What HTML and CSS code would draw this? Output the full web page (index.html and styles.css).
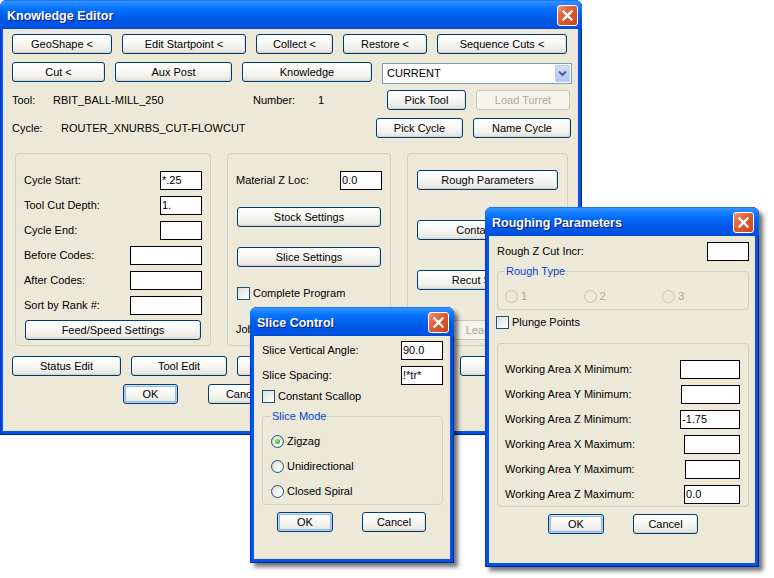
FILE: index.html
```html
<!DOCTYPE html>
<html>
<head>
<meta charset="utf-8">
<title>Knowledge Editor</title>
<link rel="stylesheet" href="styles.css">
</head>
<body>
<div class="desk">

  <!-- Main window -->
  <div class="win win-main">
    <div class="titlebar">
      <span class="title">Knowledge Editor</span>
      <span class="close"><svg width="19" height="19" viewBox="0 0 19 19"><path d="M5.5 5.5L13.5 13.5M13.5 5.5L5.5 13.5" stroke="#fff" stroke-width="2.4" stroke-linecap="square"/></svg></span>
    </div>
    <div class="client main-client">
      <div class="row">
        <div class="btn w100">GeoShape &lt;</div>
        <div class="btn w124">Edit Startpoint &lt;</div>
        <div class="btn w77">Collect &lt;</div>
        <div class="btn w84">Restore &lt;</div>
        <div class="btn w130">Sequence Cuts &lt;</div>
      </div>
      <div class="row">
        <div class="btn w93">Cut &lt;</div>
        <div class="btn w117">Aux Post</div>
        <div class="btn w130">Knowledge</div>
        <div class="combo">
          <span>CURRENT</span>
          <span class="drop"><svg width="13" height="15" viewBox="0 0 13 15"><path d="M3 5.5L6.5 9L10 5.5" fill="none" stroke="#4D6185" stroke-width="2"/></svg></span>
        </div>
      </div>
      <div class="row info">
        <span class="c41">Tool:</span>
        <span class="c200">RBIT_BALL-MILL_250</span>
        <span class="c65">Number:</span>
        <span class="c69">1</span>
        <div class="btn w79">Pick Tool</div>
        <div class="btn dis w94 ml10">Load Turret</div>
      </div>
      <div class="row info">
        <span class="c49">Cycle:</span>
        <span class="c315">ROUTER_XNURBS_CUT-FLOWCUT</span>
        <div class="btn w87">Pick Cycle</div>
        <div class="btn w98 ml10">Name Cycle</div>
      </div>

      <div class="groups">
        <div class="grp gleft">
          <div class="fr"><span>Cycle Start:</span><span class="inp i42">*.25</span></div>
          <div class="fr"><span>Tool Cut Depth:</span><span class="inp i42">1.</span></div>
          <div class="fr"><span>Cycle End:</span><span class="inp i42"></span></div>
          <div class="fr"><span>Before Codes:</span><span class="inp i72"></span></div>
          <div class="fr"><span>After Codes:</span><span class="inp i72"></span></div>
          <div class="fr"><span>Sort by Rank #:</span><span class="inp i72"></span></div>
          <div class="btn w176 feed">Feed/Speed Settings</div>
        </div>
        <div class="grp gmid">
          <div class="fr"><span>Material Z Loc:</span><span class="inp i42">0.0</span></div>
          <div class="btn w144 stock">Stock Settings</div>
          <div class="btn w144 slice">Slice Settings</div>
          <div class="chkrow cprog"><span class="chk"></span><span>Complete Program</span></div>
          <div class="job">Job Number:</div>
        </div>
        <div class="grp gright">
          <div class="btn w141">Rough Parameters</div>
          <div class="btn w141">Containment</div>
          <div class="btn w141">Recut Settings</div>
          <div class="btn dis w141 lead">Lead Settings</div>
        </div>
      </div>

      <div class="row brow">
        <div class="btn w109">Status Edit</div>
        <div class="btn w96">Tool Edit</div>
        <div class="btn w103">Post Edit</div>
        <div class="btn w100">Setup Edit</div>
        <div class="btn w106">Report</div>
      </div>
      <div class="row okrow">
        <div class="btn def w55">OK</div>
        <div class="btn w70">Cancel</div>
        <div class="btn w70">Apply</div>
      </div>
    </div>
  </div>

  <!-- Slice Control -->
  <div class="win win-slice dlg">
    <div class="titlebar">
      <span class="title">Slice Control</span>
      <span class="close"><svg width="19" height="19" viewBox="0 0 19 19"><path d="M5.5 5.5L13.5 13.5M13.5 5.5L5.5 13.5" stroke="#fff" stroke-width="2.4" stroke-linecap="square"/></svg></span>
    </div>
    <div class="client slice-client">
      <div class="fr"><span>Slice Vertical Angle:</span><span class="inp i42">90.0</span></div>
      <div class="fr mt6"><span>Slice Spacing:</span><span class="inp i42">!*tr*</span></div>
      <div class="chkrow scallop"><span class="chk"></span><span>Constant Scallop</span></div>
      <div class="gbox smode">
        <span class="legend">Slice Mode</span>
        <div class="rrow"><span class="rad on"></span><span>Zigzag</span></div>
        <div class="rrow"><span class="rad"></span><span>Unidirectional</span></div>
        <div class="rrow"><span class="rad"></span><span>Closed Spiral</span></div>
      </div>
      <div class="dlgbtns slice-btns">
        <div class="btn def w56">OK</div>
        <div class="btn w64">Cancel</div>
      </div>
    </div>
  </div>

  <!-- Roughing Parameters -->
  <div class="win win-rough dlg">
    <div class="titlebar">
      <span class="title">Roughing Parameters</span>
      <span class="close"><svg width="19" height="19" viewBox="0 0 19 19"><path d="M5.5 5.5L13.5 13.5M13.5 5.5L5.5 13.5" stroke="#fff" stroke-width="2.4" stroke-linecap="square"/></svg></span>
    </div>
    <div class="client rough-client">
      <div class="fr"><span>Rough Z Cut Incr:</span><span class="inp i42">&nbsp;</span></div>
      <div class="gbox rtype">
        <span class="legend">Rough Type</span>
        <div class="rhor">
          <div class="ritem dtext"><span class="rad dis"></span><span>1</span></div>
          <div class="ritem dtext"><span class="rad dis"></span><span>2</span></div>
          <div class="ritem dtext"><span class="rad dis"></span><span>3</span></div>
        </div>
      </div>
      <div class="chkrow plunge"><span class="chk"></span><span>Plunge Points</span></div>
      <div class="gbox warea">
        <div class="fr"><span>Working Area X Minimum:</span><span class="inp i60"></span></div>
        <div class="fr"><span>Working Area Y Minimum:</span><span class="inp i59"></span></div>
        <div class="fr"><span>Working Area Z Minimum:</span><span class="inp i60">-1.75</span></div>
        <div class="fr"><span>Working Area X Maximum:</span><span class="inp i56"></span></div>
        <div class="fr"><span>Working Area Y Maximum:</span><span class="inp i55"></span></div>
        <div class="fr"><span>Working Area Z Maximum:</span><span class="inp i56">0.0</span></div>
      </div>
      <div class="dlgbtns rough-btns">
        <div class="btn def w56">OK</div>
        <div class="btn w65">Cancel</div>
      </div>
    </div>
  </div>

</div>
</body>
</html>
```

FILE: styles.css
```css
* { box-sizing: border-box; }
html, body { margin: 0; padding: 0; background: #ffffff; }
body {
  font-family: "Liberation Sans", Arial, sans-serif;
  font-size: 11px;
  color: #000;
  line-height: 13px;
}
.desk { position: relative; width: 774px; height: 578px; overflow: hidden; background: #fff; }

/* ---------- windows ---------- */
.win {
  position: absolute;
  display: flex;
  flex-direction: column;
  background: #0055E5;
  border-radius: 7px 7px 0 0;
  box-shadow: inset 1px 0 0 #0831D9, inset -1px 0 0 #001EA0, inset 0 -1px 0 #001EA0;
}
.win-main { left: 0; top: 0; width: 582px; height: 435px; }
.win-slice { left: 250px; top: 307px; width: 204px; height: 256px; }
.win-rough { left: 485px; top: 207px; width: 274px; height: 360px; }
.dlg {
  box-shadow: inset 1px 0 0 #0831D9, inset -1px 0 0 #001EA0, inset 0 -1px 0 #001EA0,
              4px 4px 4px rgba(0,0,0,0.55);
}

.titlebar {
  height: 29px;
  flex: none;
  display: flex;
  align-items: center;
  justify-content: space-between;
  padding: 1px 5px 0 7px;
  border-radius: 7px 7px 0 0;
  background: linear-gradient(180deg, #0058EE 0px, #3A93FF 1px, #288BFF 3px, #127DFF 6px,
              #036FFC 10px, #0262EE 15px, #0057E5 20px, #0054E3 24px, #0055EB 26px, #0050D8 28px, #0046C4 29px);
}
.win-main .titlebar { padding-right: 4px; }
.title {
  color: #fff;
  font-weight: bold;
  font-size: 12.5px;
  padding-top: 2px;
  text-shadow: 1px 1px 0 #0A1883;
  white-space: nowrap;
}
.close {
  width: 21px;
  height: 21px;
  flex: none;
  display: flex;
  border: 1px solid #fff;
  border-radius: 3px;
  background: linear-gradient(135deg, #F4A286 0%, #E8724D 22%, #DE5A30 50%, #CC4418 100%);
}

.client {
  flex: 1;
  background: #ECE9D8;
  margin: 0 4px 4px 4px;
  display: flex;
  flex-direction: column;
}
.main-client { margin-left: 3px; padding: 5px 0 0 9px; gap: 8px; }

/* ---------- rows ---------- */
.row { display: flex; gap: 10px; height: 20px; flex: none; }
.info { gap: 0; align-items: center; }
.c41 { width: 41px; }
.c49 { width: 49px; }
.c65 { width: 65px; }
.c69 { width: 69px; }
.c200 { width: 200px; }
.c315 { width: 315px; }
.ml10 { margin-left: 10px; }
.mt6 { margin-top: 6px; }

/* ---------- buttons ---------- */
.btn {
  height: 20px;
  flex: none;
  display: flex;
  align-items: center;
  justify-content: center;
  border: 1px solid #003C74;
  border-radius: 3px;
  background: linear-gradient(180deg, #FFFFFF 0%, #FBFBF9 30%, #F1F0EB 70%, #E4E1D8 100%);
  box-shadow: inset 0 -1px 0 #D8D2C6, inset -1px 0 0 #E6E2D8;
  white-space: nowrap;
  overflow: hidden;
}
.btn.def {
  box-shadow: inset 0 1px 0 #CEE7FF, inset 0 0 0 1px #B7CFF3, inset 0 0 0 2px #98B8EA;
}
.btn.dis {
  border-color: #C9C7BA;
  background: #F5F4EA;
  color: #ACA899;
  box-shadow: none;
}
.w55 { width: 55px; } .w56 { width: 56px; } .w64 { width: 64px; } .w65 { width: 65px; }
.w70 { width: 70px; } .w77 { width: 77px; } .w79 { width: 79px; } .w84 { width: 84px; }
.w87 { width: 87px; } .w93 { width: 93px; } .w94 { width: 94px; } .w96 { width: 96px; }
.w98 { width: 98px; } .w100 { width: 100px; } .w103 { width: 103px; } .w106 { width: 106px; }
.w109 { width: 109px; } .w117 { width: 117px; } .w124 { width: 124px; } .w130 { width: 130px; }
.w141 { width: 141px; } .w144 { width: 144px; } .w176 { width: 176px; }

/* ---------- combo ---------- */
.combo {
  width: 190px;
  height: 21px;
  margin-top: 1px;
  flex: none;
  border: 1px solid #7F9DB9;
  background: #fff;
  display: flex;
  align-items: center;
  justify-content: space-between;
  padding: 1px 1px 1px 4px;
}
.drop {
  width: 15px;
  height: 17px;
  display: flex;
  align-items: center;
  justify-content: center;
  border: 1px solid #B5C8F2;
  border-radius: 2px;
  background: linear-gradient(180deg, #D2DEFC 0%, #C1D2FA 50%, #B3C6F5 100%);
}

/* ---------- inputs ---------- */
.inp {
  height: 19px;
  flex: none;
  border: 1px solid #000;
  background: #fff;
  padding: 0 1px;
  line-height: 17px;
  white-space: nowrap;
  overflow: hidden;
}
.i42 { width: 42px; } .i55 { width: 55px; } .i56 { width: 56px; } .i59 { width: 59px; }
.i60 { width: 60px; } .i72 { width: 72px; }

.fr { display: flex; justify-content: space-between; align-items: center; height: 19px; flex: none; }

/* ---------- check / radio ---------- */
.chkrow { display: flex; align-items: center; gap: 3px; height: 13px; flex: none; }
.chk {
  width: 13px;
  height: 13px;
  flex: none;
  border: 1px solid #1C5180;
  background: linear-gradient(135deg, #DCDCD7 0%, #EEEEEA 50%, #FFFFFF 100%);
}
.rad {
  width: 13px;
  height: 13px;
  flex: none;
  border-radius: 50%;
  border: 1px solid #1C5180;
  background: radial-gradient(circle at 70% 70%, #FFFFFF 0%, #F0F0EB 45%, #D6D6CE 100%);
  display: flex;
  align-items: center;
  justify-content: center;
}
.rad.on::after {
  content: "";
  width: 5px;
  height: 5px;
  border-radius: 50%;
  background: radial-gradient(circle at 35% 35%, #9BEA98 0%, #40B83D 60%, #21A121 100%);
}
.rad.dis { border-color: #CAC8BB; background: #ECE9D8; }
.dtext { color: #ACA899; }

/* ---------- group boxes ---------- */
.groups { display: flex; gap: 16px; margin: 7px 0 0 3px; flex: none; }
.grp {
  height: 193px;
  flex: none;
  border: 1px solid #D0D0BF;
  border-radius: 4px;
  display: flex;
  flex-direction: column;
}
.gleft { width: 196px; padding: 17px 8px 0 8px; gap: 6px; }
.feed { margin: -1px 0 0 1px; }
.gmid { width: 164px; padding: 17px 8px 0 8px; }
.stock { margin: 17px 0 0 1px; }
.slice { margin: 20px 0 0 1px; }
.cprog { margin: 20px 0 0 1px; }
.job { margin-top: 23px; }
.gright { width: 161px; padding: 16px 0 0 9px; gap: 30px; }
.lead { padding-left: 24px; }

.brow { margin-top: 2px; }
.okrow { margin-left: 111px; gap: 30px; }

.gbox {
  position: relative;
  flex: none;
  border: 1px solid #D0D0BF;
  border-radius: 4px;
  display: flex;
  flex-direction: column;
}
.gbox .legend {
  position: absolute;
  top: -7px;
  left: 8px;
  padding: 0 1px;
  background: #ECE9D8;
  color: #0046D5;
  line-height: 13px;
}

/* ---------- Slice Control ---------- */
.slice-client { padding: 5px 7px 0 8px; }
.scallop { margin-top: 5px; }
.smode { margin-top: 13px; padding: 18px 8px 6px 8px; gap: 12px; }
.rrow { display: flex; align-items: center; gap: 3px; height: 13px; }
.dlgbtns { display: flex; flex: none; height: 20px; margin-top: 7px; }
.slice-btns { padding-left: 15px; gap: 29px; }

/* ---------- Roughing Parameters ---------- */
.rough-client { padding: 6px 6px 0 8px; }
.rtype { margin-top: 10px; padding: 18px 7px 6px 7px; }
.rtype .legend { left: 7px; }
.rhor { display: flex; height: 13px; }
.ritem { width: 81px; display: flex; align-items: center; gap: 3px; }
.plunge { margin: 6px 0 0 -1px; }
.warea { margin-top: 14px; padding: 16px 8px 2px 7px; gap: 6px; }
.rough-btns { padding-left: 51px; gap: 29px; }
```
